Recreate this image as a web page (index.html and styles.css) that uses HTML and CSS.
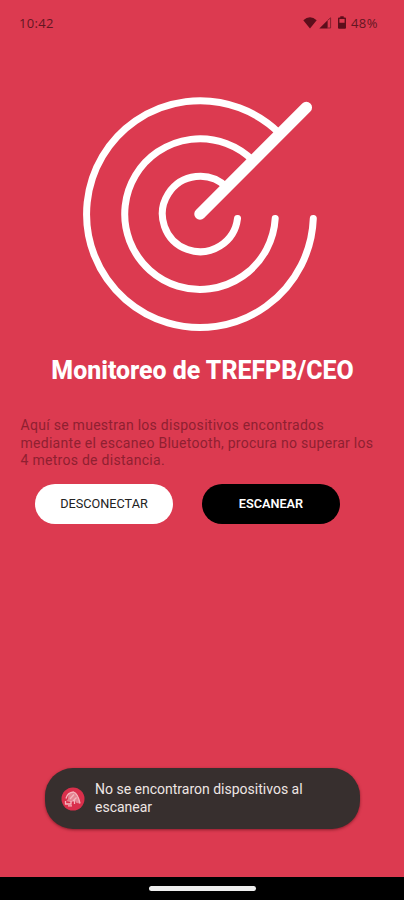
FILE: index.html
```html
<!DOCTYPE html>
<html lang="es">
<head>
  <meta charset="UTF-8">
  <meta name="viewport" content="width=device-width, initial-scale=1.0">
  <title>Monitoreo de TREFPB/CEO</title>
  <link rel="stylesheet" href="styles.css">
</head>
<body>
  <header class="status-bar">
    <span class="time">10:42</span>
    <div class="status-icons">
      <svg class="wifi" width="14" height="12" viewBox="0 0 14 12">
        <path d="M0.3 3.2 Q7 -2.6 13.7 3.2 L7 11.6 Z"/>
      </svg>
      <svg class="signal" width="13" height="12" viewBox="0 0 13 12">
        <path d="M0.3 11.5 L8.6 3.2 V11.5 Z"/>
        <path class="signal-rest" d="M8.6 3.4 L11.6 0.8 V11 H8.6"/>
      </svg>
      <svg class="battery" width="8" height="13" viewBox="0 0 8 13">
        <path fill-rule="evenodd" d="M2.3 0.3 H5.7 V1.6 H7 Q8 1.6 8 2.6 V11.7 Q8 12.7 7 12.7 H1 Q0 12.7 0 11.7 V2.6 Q0 1.6 1 1.6 H2.3 Z M1.4 3 V6.8 H6.6 V3 Z"/>
      </svg>
      <span class="percent">48%</span>
    </div>
  </header>

  <main class="content">
    <svg class="radar" width="244" height="244" viewBox="78 92 244 244">
      <path d="M280.1 133.9 A113.4 113.4 0 1 0 313.3 218.5"/>
      <path d="M253.2 160.8 A75.3 75.3 0 1 0 275.2 218.5"/>
      <path d="M226.7 187.3 A37.7 37.7 0 1 0 237.5 218.5"/>
      <path class="needle" d="M200 214 L306.3 107.5"/>
    </svg>

    <h1>Monitoreo de TREFPB/CEO</h1>

    <p class="description">
      Aquí se muestran los dispositivos encontrados<br>
      mediante el escaneo Bluetooth, procura no superar los<br>
      4 metros de distancia.
    </p>

    <div class="buttons">
      <button class="btn btn-light" type="button">DESCONECTAR</button>
      <button class="btn btn-dark" type="button">ESCANEAR</button>
    </div>
  </main>

  <div class="toast">
    <svg class="toast-icon" width="24" height="24" viewBox="0 0 24 24">
      <circle cx="12" cy="12" r="11.5"/>
      <path class="dome" d="M7 12 Q6.5 6 12.5 5 Q17.5 6.5 18.8 16.5 L15.5 16 L13.5 13 L10.5 15.5 L5.5 14 Z"/>
      <path d="M5 11.5 Q6.5 5.5 12.5 5 Q17 6.5 19 16.5 M9 12 L13 7.5 M12 14 L15.5 10.5 M13.5 13 V17 M4.5 14 V17 H10 V14 M7 18.8 H11"/>
    </svg>
    <p>No se encontraron dispositivos al<br>escanear</p>
  </div>

  <footer class="nav-bar">
    <div class="nav-handle"></div>
  </footer>
</body>
</html>
```

FILE: styles.css
```css
* {
  box-sizing: border-box;
}
body {
  margin: 0;
  height: 900px;
  display: flex;
  flex-direction: column;
  overflow: hidden;
  background-color: #dc3a50;
  font-family: Roboto, sans-serif;
}
.status-bar {
  display: flex;
  justify-content: space-between;
  align-items: center;
  height: 45px;
  padding: 0 26px 0 19px;
  color: #641622;
  font-family: "Open Sans", sans-serif;
  font-size: 13px;
}
.time {
  letter-spacing: 0.3px;
}
.status-icons {
  display: flex;
  align-items: center;
}
.status-icons svg {
  fill: #5c0e1b;
}
.signal {
  margin-left: 2px;
}
.status-icons .signal-rest {
  fill: none;
  stroke: #85202f;
}
.battery {
  margin-left: 6px;
}
.percent {
  margin-left: 5px;
  letter-spacing: 0.5px;
}
.content {
  flex: 1;
}
.radar {
  display: block;
  margin: 47px 0 0 78px;
  fill: none;
  stroke: #fff;
  stroke-width: 7;
  stroke-linecap: round;
}
.radar .needle {
  stroke-width: 11.5;
}
h1 {
  margin: 19px 0 0;
  padding-left: 1px;
  color: #fff;
  font-size: 24.9px;
  font-weight: 800;
  line-height: 31px;
  text-align: center;
  white-space: nowrap;
}
.description {
  margin: 31px 0 0 20.5px;
  color: #8f2031;
  font-size: 14px;
  line-height: 17.5px;
  letter-spacing: 0.28px;
  white-space: nowrap;
}
.buttons {
  display: flex;
  gap: 29px;
  margin: 14px 0 0 35px;
}
.btn {
  width: 138px;
  height: 40px;
  padding: 0;
  border: none;
  border-radius: 20px;
  font-family: Roboto, sans-serif;
  font-size: 12.7px;
}
.btn-light {
  background-color: #fff;
  color: #222;
}
.btn-dark {
  background-color: #000;
  color: #fff;
  font-weight: 600;
}
.toast {
  display: flex;
  align-items: center;
  width: 315px;
  height: 61px;
  margin: 0 0 48px 45px;
  padding-left: 16px;
  border-radius: 28px;
  background-color: #372f2e;
  box-shadow: 0 1px 3px rgba(60, 0, 10, 0.5);
}
.toast p {
  margin: 0 0 0 10px;
  color: #eee6e4;
  font-size: 14px;
  line-height: 17.5px;
}
.toast-icon circle {
  fill: #d92f4b;
}
.toast-icon path {
  fill: none;
  stroke: #f4b6bd;
  stroke-width: 1.3;
}
.toast-icon .dome {
  fill: #e58592;
  stroke: none;
}
.nav-bar {
  display: flex;
  justify-content: center;
  height: 23px;
  padding-top: 9px;
  background-color: #000;
}
.nav-handle {
  width: 107px;
  height: 5px;
  border-radius: 3px;
  background-color: #eee;
}
```
